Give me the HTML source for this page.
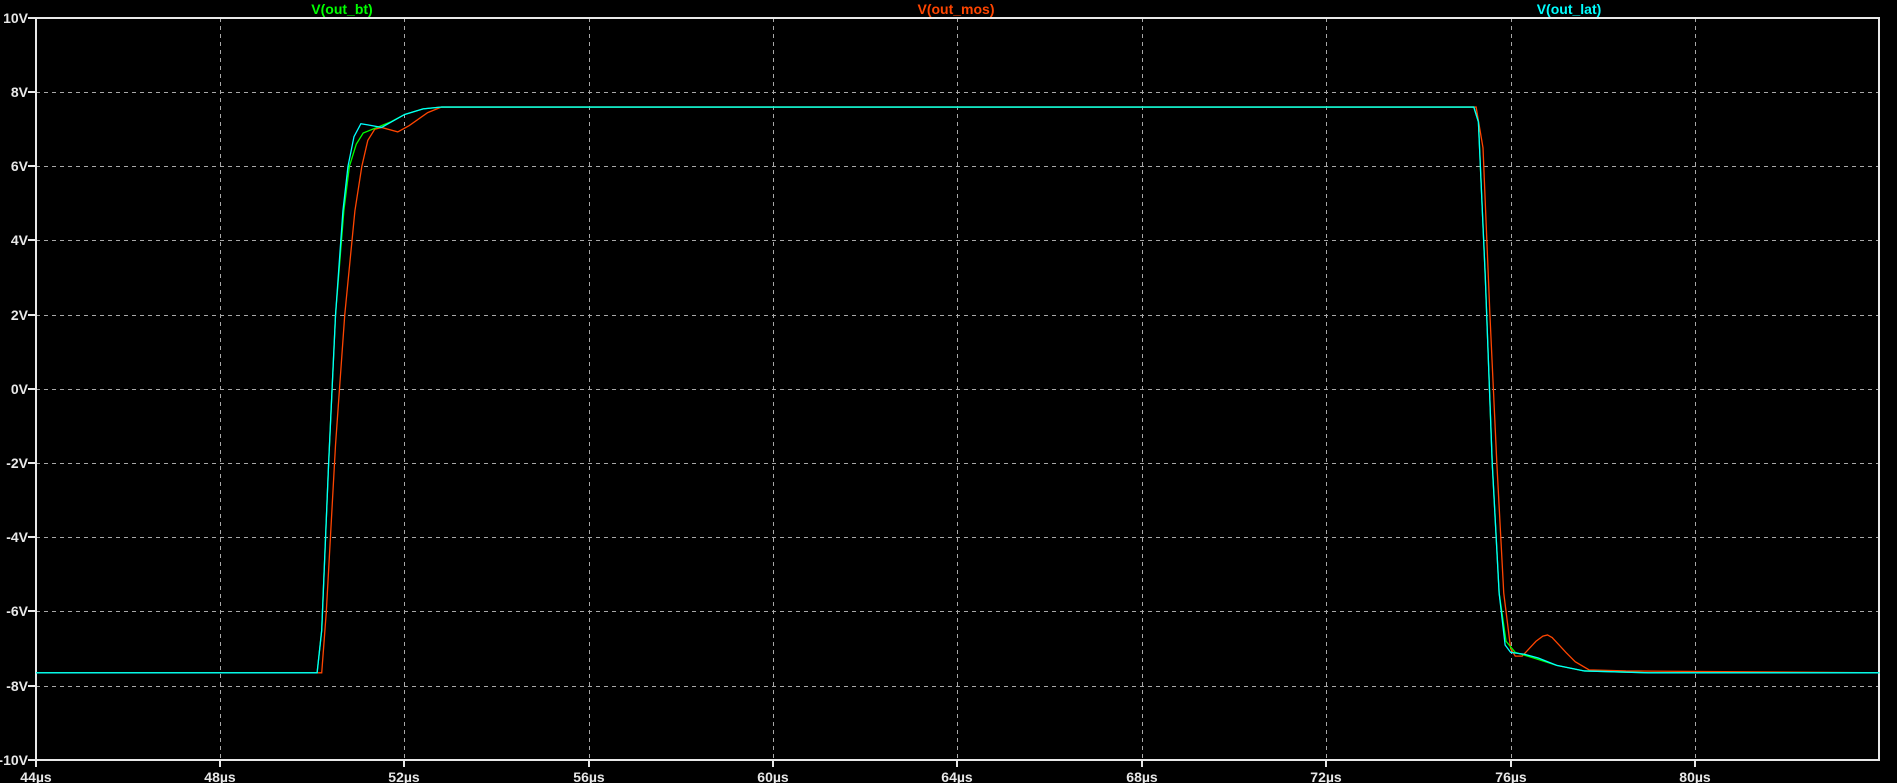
<!DOCTYPE html>
<html><head><meta charset="utf-8"><style>
html,body{margin:0;padding:0;background:#000;width:1897px;height:783px;overflow:hidden}
svg{display:block}
text{font-family:"Liberation Sans",sans-serif;font-weight:bold;font-size:14px}
</style></head><body>
<svg width="1897" height="783" xmlns="http://www.w3.org/2000/svg">
<g stroke="#a8a8a8" stroke-width="1" stroke-dasharray="4,4" fill="none">
<path d="M36 92.5H1879M36 166.5H1879M36 240.5H1879M36 315.5H1879M36 389.5H1879M36 463.5H1879M36 537.5H1879M36 611.5H1879M36 686.5H1879"/>
<path d="M220.5 18V760M404.5 18V760M589.5 18V760M773.5 18V760M957.5 18V760M1142.5 18V760M1326.5 18V760M1511.5 18V760M1695.5 18V760"/>
</g>
<g stroke="#e8e8e8" stroke-width="2" fill="none">
<rect x="36" y="18" width="1843" height="742"/>
<path d="M28 18H36M28 92H36M28 166H36M28 240H36M28 315H36M28 389H36M28 463H36M28 537H36M28 611H36M28 686H36M28 760H36"/>
<path d="M36 760V767M220 760V767M404 760V767M589 760V767M773 760V767M957 760V767M1142 760V767M1326 760V767M1511 760V767M1695 760V767"/>
</g>
<g fill="#e8e8e8" text-anchor="end">
<text x="28" y="23">10V</text><text x="28" y="97">8V</text><text x="28" y="171">6V</text><text x="28" y="245">4V</text><text x="28" y="320">2V</text><text x="28" y="394">0V</text><text x="28" y="468">-2V</text><text x="28" y="542">-4V</text><text x="28" y="616">-6V</text><text x="28" y="691">-8V</text><text x="28" y="765">-10V</text>
</g>
<g fill="#e8e8e8" text-anchor="middle">
<text x="36" y="782">44µs</text><text x="220" y="782">48µs</text><text x="404" y="782">52µs</text><text x="589" y="782">56µs</text><text x="773" y="782">60µs</text><text x="957" y="782">64µs</text><text x="1142" y="782">68µs</text><text x="1326" y="782">72µs</text><text x="1511" y="782">76µs</text><text x="1695" y="782">80µs</text>
</g>
<text x="342" y="14" fill="#00ff00" text-anchor="middle">V(out_bt)</text>
<text x="956" y="14" fill="#ff4500" text-anchor="middle">V(out_mos)</text>
<text x="1569" y="14" fill="#00ffff" text-anchor="middle">V(out_lat)</text>
<g transform="translate(36,389) scale(46.083,-37.1) translate(-44,0)" fill="none" stroke-width="1.3">
<polyline vector-effect="non-scaling-stroke" stroke="#ff4500" points="44,-7.65 50.2,-7.65 50.3,-6 50.5,-1.5 50.7,2 50.92,4.8 51.07,6 51.2,6.7 51.35,7.0 51.5,7.05 51.85,6.93 52.1,7.1 52.5,7.45 52.8,7.6 75.25,7.6 75.4,6.5 75.55,2 75.7,-2 75.85,-5.5 76.0,-7.0 76.1,-7.2 76.25,-7.2 76.4,-7.0 76.55,-6.8 76.7,-6.66 76.8,-6.63 76.9,-6.7 77.05,-6.9 77.2,-7.1 77.4,-7.35 77.7,-7.57 78.5,-7.6 84,-7.65"/>
<polyline vector-effect="non-scaling-stroke" stroke="#00ff00" points="44,-7.65 50.1,-7.65 50.2,-6.5 50.35,-2 50.5,2 50.68,4.8 50.8,6 50.95,6.6 51.1,6.9 51.4,7.05 51.7,7.2 52,7.4 52.4,7.55 52.8,7.6 75.2,7.6 75.3,7.2 75.45,3 75.6,-2 75.75,-5.5 75.9,-6.8 76.1,-7.1 76.5,-7.25 77,-7.45 77.6,-7.6 79,-7.65 84,-7.65"/>
<polyline vector-effect="non-scaling-stroke" stroke="#00ffff" points="44,-7.65 50.1,-7.65 50.2,-6.5 50.35,-2 50.5,2 50.66,4.8 50.77,6 50.9,6.8 51.05,7.15 51.2,7.12 51.5,7.05 52,7.4 52.4,7.55 52.8,7.6 75.2,7.6 75.3,7.2 75.45,3 75.6,-2 75.75,-5.5 75.88,-6.9 76.0,-7.1 76.3,-7.15 76.6,-7.25 77,-7.45 77.6,-7.6 79,-7.65 84,-7.65"/>
</g>
</svg>
</body></html>
